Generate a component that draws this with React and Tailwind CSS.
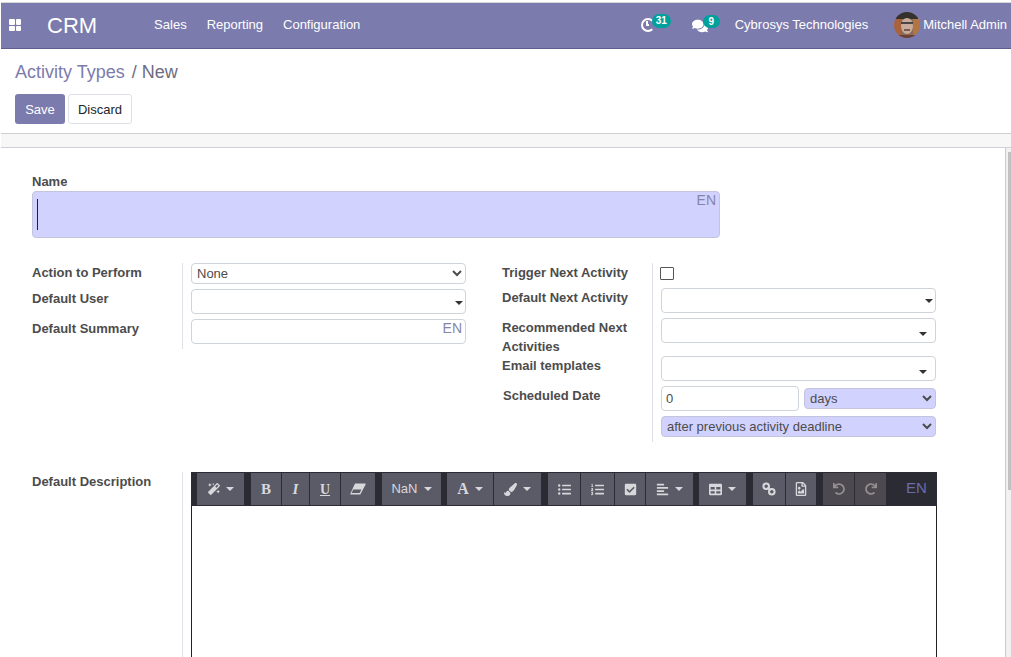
import { FaMagic, FaPaintBrush, FaListUl, FaListOl, FaCheckSquare, FaAlignLeft, FaTable, FaRegFileImage, FaUndo, FaRedo, FaComments } from "react-icons/fa";

function Avatar() {
  return (
    <svg width="26" height="26" viewBox="0 0 26 26" className="shrink-0">
      <defs>
        <clipPath id="avatar-clip">
          <circle cx="13" cy="13" r="13" />
        </clipPath>
        <filter id="avatar-blur">
          <feGaussianBlur stdDeviation="0.6" />
        </filter>
      </defs>
      <g clipPath="url(#avatar-clip)">
        <g filter="url(#avatar-blur)">
          <rect width="26" height="26" fill="#8a6a58" />
          <rect x="0" y="6" width="7" height="20" fill="#a8623c" />
          <rect x="19" y="6" width="7" height="20" fill="#b0743f" />
          <rect x="2" y="0" width="22" height="7" fill="#35302f" />
          <ellipse cx="13" cy="14" rx="6" ry="8" fill="#c8ab9a" />
          <rect x="7" y="10" width="12" height="2" fill="#4a4446" />
          <rect x="10" y="17" width="6" height="2" fill="#7d5a50" />
          <rect x="3" y="23" width="20" height="3" fill="#6e4034" />
        </g>
      </g>
    </svg>
  );
}

function EraserIcon() {
  return (
    <svg width="16" height="12" viewBox="0 0 16 12" fill="currentColor">
      <path d="M5 0.5 H15 a0.7 0.7 0 0 1 0.6 1 L10.6 11 a1 1 0 0 1 -0.9 0.5 H1 a0.7 0.7 0 0 1 -0.6 -1 Z" />
      <path d="M3.2 6.5 L1.6 10 H9.6 L11.4 6.5 Z" fill="#5a5b66" />
    </svg>
  );
}

function LinkIcon() {
  return (
    <svg width="14" height="14" viewBox="0 0 14 14" fill="none" stroke="currentColor" strokeWidth="2">
      <circle cx="4.2" cy="4.2" r="2.8" />
      <circle cx="9.8" cy="9.8" r="2.8" />
      <path d="M5.5 5.5 L8.5 8.5" />
    </svg>
  );
}

function Many2one({ className = "", caret = "" }) {
  return (
    <div className={`relative ${className}`}>
      <input className="h-full w-full rounded-[4px] border border-[#ced4da] bg-white px-1.5 outline-none" />
      <span className={`absolute h-0 w-0 border-x-[4px] border-t-[4px] border-x-transparent border-t-[#333] ${caret}`} />
    </div>
  );
}

function Tool({ w, children, dim }) {
  return (
    <div className={`flex h-[32px] items-center justify-center gap-[6px] ${w} ${dim ? "bg-[#4c4a50] text-[#94908f]" : "bg-[#5a5b66] text-[#d8d8dc]"}`}>
      {children}
    </div>
  );
}

function Caret() {
  return <span className="h-0 w-0 border-x-[4px] border-t-[4px] border-x-transparent border-t-[#d8d8dc]" />;
}

function Toolbar() {
  return (
    <div className="flex h-[34px] w-[746px] items-center bg-[#2a2b33] pl-[6px]">
      <Tool w="w-[47px]"><FaMagic size={12} /><Caret /></Tool>
      <div className="ml-[7px] flex gap-px">
        <Tool w="w-[30px]"><span className="font-['Liberation_Serif',serif] text-[15px] font-bold">B</span></Tool>
        <Tool w="w-[27px]"><span className="font-['Liberation_Serif',serif] text-[15px] font-bold italic">I</span></Tool>
        <Tool w="w-[30px]"><span className="font-['Liberation_Serif',serif] text-[14px] font-bold underline">U</span></Tool>
        <Tool w="w-[34px]"><EraserIcon /></Tool>
      </div>
      <div className="ml-[7px]">
        <Tool w="w-[59px]"><span className="text-[13px]">NaN</span><Caret /></Tool>
      </div>
      <div className="ml-[6px] flex gap-px">
        <Tool w="w-[46px]"><span className="font-['Liberation_Serif',serif] text-[16px] font-bold">A</span><Caret /></Tool>
        <Tool w="w-[47px]"><FaPaintBrush size={13} /><Caret /></Tool>
      </div>
      <div className="ml-[7px] flex gap-px">
        <Tool w="w-[32px]"><FaListUl size={13} /></Tool>
        <Tool w="w-[33px]"><FaListOl size={13} /></Tool>
        <Tool w="w-[30px]"><FaCheckSquare size={13} /></Tool>
        <Tool w="w-[47px]"><FaAlignLeft size={13} /><Caret /></Tool>
      </div>
      <div className="ml-[6px]">
        <Tool w="w-[47px]"><FaTable size={13} /><Caret /></Tool>
      </div>
      <div className="ml-[7px] flex gap-px">
        <Tool w="w-[32px]"><LinkIcon /></Tool>
        <Tool w="w-[30px]"><FaRegFileImage size={14} /></Tool>
      </div>
      <div className="ml-[7px] flex gap-px">
        <Tool w="w-[31px]" dim><FaUndo size={12} /></Tool>
        <Tool w="w-[31px]" dim><FaRedo size={12} /></Tool>
      </div>
      <span className="mb-[2px] ml-[20px] text-[15px] text-[#6a6cac]">EN</span>
    </div>
  );
}

function Field({ label, className, children, labelClass = "" }) {
  return (
    <div className={`flex ${className}`}>
      <div className={`w-[150px] shrink-0 pr-2 font-bold leading-[19px] text-[#4c4c4c] ${labelClass}`}>{label}</div>
      <div className="flex-1 border-l border-[#dee2e6] pl-2">{children}</div>
    </div>
  );
}

export default function App() {
  return (
    <div className="flex h-screen flex-col overflow-hidden bg-white pl-px pt-[2px] font-['Liberation_Sans',Arial,sans-serif] text-[13px] text-[#4c4c4c]">
      <nav className="flex h-[47px] shrink-0 items-center border-t border-b border-t-[#d8d8d8] border-b-[#5f5e8f] bg-[#7c7bad] pb-px pl-[8px] text-white">
        <div className="grid h-[12px] w-[12px] grid-cols-2 gap-px">
          <span className="rounded-[1px] bg-white" />
          <span className="rounded-[1px] bg-white" />
          <span className="rounded-[1px] bg-white" />
          <span className="rounded-[1px] bg-white" />
        </div>
        <span className="ml-[26px] text-[22px]">CRM</span>
        <div className="ml-[57px] flex gap-[20px]">
          <span>Sales</span>
          <span>Reporting</span>
          <span>Configuration</span>
        </div>
        <div className="ml-auto flex items-center">
          <div className="relative mr-[37px] h-[14px] w-[14px] rounded-full border-[2.5px] border-white border-r-transparent">
            <span className="absolute left-[3px] top-[1px] h-[5px] w-[3px] border-b-2 border-l-2 border-white" />
            <span className="absolute left-[9px] top-[-6px] h-[14px] w-[19px] rounded-full bg-[#00a09d] text-center text-[10px] font-bold leading-[14px]">31</span>
          </div>
          <div className="relative mr-[15px] h-[14px] w-[28px]">
            <FaComments size={16} className="absolute left-0 top-0 text-white" />
            <span className="absolute left-[11px] top-[-3px] h-[13px] w-[17px] rounded-full bg-[#00a09d] text-center text-[10px] font-bold leading-[13px]">9</span>
          </div>
          <span className="mr-[26px]">Cybrosys Technologies</span>
          <Avatar />
          <span className="ml-[3px] mr-[4px] whitespace-nowrap">Mitchell Admin</span>
        </div>
      </nav>

      <header className="h-[85px] shrink-0 border-b border-[#cfcfcf] pl-[14px] pt-[11px]">
        <div className="flex gap-[2px] whitespace-pre text-[18px] leading-[24px]">
          <span className="text-[#7c7bad]">Activity Types</span>
          <span className="text-[#6c6c84]"> / New</span>
        </div>
        <div className="mt-[10px] flex gap-[3px]">
          <button className="h-[30px] w-[50px] rounded-[3px] bg-[#7c7bad] pt-px text-white">Save</button>
          <button className="h-[30px] w-[64px] rounded-[3px] border border-[#dee2e6] bg-white pt-px text-[#212529]">Discard</button>
        </div>
      </header>

      <div className="flex min-h-0 flex-1 flex-col">
        <div className="h-[14px] shrink-0 border-b border-[#d0d0d8] bg-[#f7f7f7]" />
        <div className="flex min-h-0 flex-1">
          <main className="min-w-0 flex-1 border-r border-[#c9c8dc] bg-white pl-[31px] pt-[25px]">
            <label className="block font-bold leading-[17px]">Name</label>
            <div className="relative mt-[1px] h-[47px] w-[688px] rounded-[4px] border border-[#c4c4dc] bg-[#d2d2ff]">
              <span className="absolute left-[4px] top-[7px] h-[31px] w-px bg-[#222]" />
              <span className="absolute right-[3px] top-[-2px] text-[14px] text-[#8585a8]">EN</span>
            </div>

            <div className="mt-[25px] flex gap-[36px]">
              <div className="w-[434px] self-start">
                <Field label="Action to Perform" className="h-[26px]">
                  <select className="h-[21px] w-[275px] rounded-[4px] border border-[#ced4da] bg-white pl-px">
                    <option>None</option>
                  </select>
                </Field>
                <Field label="Default User" className="h-[30px]">
                  <Many2one className="h-[25px] w-[275px]" caret="right-[3px] top-[12px]" />
                </Field>
                <Field label="Default Summary" className="h-[30px]">
                  <div className="relative h-[25px] w-[275px]">
                    <input className="h-full w-full rounded-[4px] border border-[#ced4da] bg-white outline-none" />
                    <span className="absolute right-[4px] top-[-1px] text-[14px] text-[#8585a8]">EN</span>
                  </div>
                </Field>
              </div>

              <div className="w-[434px]">
                <Field label="Trigger Next Activity" className="h-[25px]">
                  <input type="checkbox" className="mt-[4px] -ml-px block h-[13px] w-[14px] appearance-none rounded-[1px] border border-[#555] bg-white" />
                </Field>
                <Field label="Default Next Activity" className="h-[30px]">
                  <Many2one className="h-[25px] w-[275px]" caret="right-[3px] top-[11px]" />
                </Field>
                <Field label="Recommended Next Activities" className="h-[38px]">
                  <Many2one className="h-[25px] w-[275px]" caret="right-[9px] top-[14px]" />
                </Field>
                <Field label="Email templates" className="h-[30px]">
                  <Many2one className="h-[25px] w-[275px]" caret="right-[9px] top-[14px]" />
                </Field>
                <Field label="Scheduled Date" className="h-[56px]" labelClass="pl-px">
                  <div className="flex items-center gap-[5px]">
                    <input defaultValue="0" className="h-[25px] w-[138px] rounded-[4px] border border-[#ced4da] bg-white px-1 outline-none" />
                    <select className="h-[21px] w-[132px] rounded-[4px] border border-[#c4c4dc] bg-[#d2d2ff] pl-px">
                      <option>days</option>
                    </select>
                  </div>
                  <select className="mt-[5px] block h-[21px] w-[275px] rounded-[4px] border border-[#c4c4dc] bg-[#d2d2ff] pl-px">
                    <option>after previous activity deadline</option>
                  </select>
                </Field>
              </div>
            </div>

            <div className="mt-[30px] flex h-[300px]">
              <div className="w-[150px] shrink-0 font-bold leading-[19px]">Default Description</div>
              <div className="flex-1 border-l border-[#dee2e6] pl-2">
                <Toolbar />
                <div className="h-[300px] w-[746px] border-x border-[#222] bg-white" />
              </div>
            </div>
          </main>
          <div className="w-[5px] shrink-0 bg-[#f1f1f1] pl-[2px] pt-[4px]">
            <div className="h-[338px] w-[3px] bg-[#c1c1c1]" />
          </div>
        </div>
      </div>
    </div>
  );
}
